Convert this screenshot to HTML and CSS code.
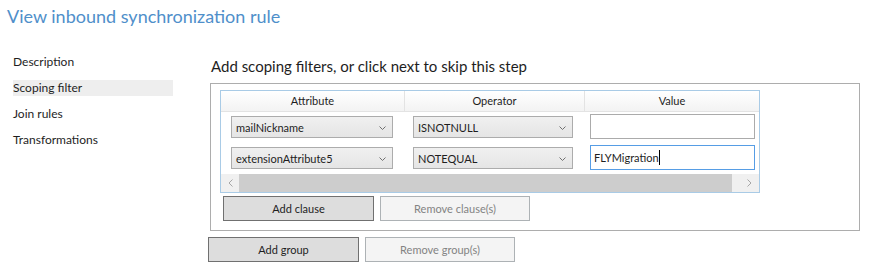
FILE: index.html
```html
<!DOCTYPE html>
<html>
<head>
<meta charset="utf-8">
<link rel="stylesheet" href="styles.css">
</head>
<body>
<div class="title">View inbound synchronization rule</div>
<div class="main">
  <nav class="nav">
    <div class="nav-item">Description</div>
    <div class="nav-item active">Scoping filter</div>
    <div class="nav-item">Join rules</div>
    <div class="nav-item">Transformations</div>
  </nav>
  <section class="content">
    <div class="heading">Add scoping filters, or click next to skip this step</div>
    <div class="group-box">
      <div class="grid">
        <div class="grid-head">
          <div class="hcell c1">Attribute</div>
          <div class="hcell c2">Operator</div>
          <div class="hcell c3">Value</div>
        </div>
        <div class="grid-row">
          <div class="cell c1"><div class="combo w1"><span>mailNickname</span><svg class="chev" width="7" height="4" viewBox="0 0 7 4"><polyline points="0.5,0.5 3.5,3.5 6.5,0.5" fill="none" stroke="#707070" stroke-width="1"/></svg></div></div>
          <div class="cell c2"><div class="combo w2"><span>ISNOTNULL</span><svg class="chev" width="7" height="4" viewBox="0 0 7 4"><polyline points="0.5,0.5 3.5,3.5 6.5,0.5" fill="none" stroke="#707070" stroke-width="1"/></svg></div></div>
          <div class="cell c3"><div class="textbox"></div></div>
        </div>
        <div class="grid-row">
          <div class="cell c1"><div class="combo w1"><span>extensionAttribute5</span><svg class="chev" width="7" height="4" viewBox="0 0 7 4"><polyline points="0.5,0.5 3.5,3.5 6.5,0.5" fill="none" stroke="#707070" stroke-width="1"/></svg></div></div>
          <div class="cell c2"><div class="combo w2"><span>NOTEQUAL</span><svg class="chev" width="7" height="4" viewBox="0 0 7 4"><polyline points="0.5,0.5 3.5,3.5 6.5,0.5" fill="none" stroke="#707070" stroke-width="1"/></svg></div></div>
          <div class="cell c3"><div class="textbox focused"><span>FLYMigration</span><span class="caret"></span></div></div>
        </div>
        <div class="hscroll">
          <div class="sb-btn left"><svg width="5" height="8" viewBox="0 0 5 8"><polyline points="4.5,0.5 1,4 4.5,7.5" fill="none" stroke="#a6a6a6" stroke-width="1"/></svg></div>
          <div class="sb-thumb"></div>
          <div class="sb-btn right"><svg width="5" height="8" viewBox="0 0 5 8"><polyline points="0.5,0.5 4,4 0.5,7.5" fill="none" stroke="#a6a6a6" stroke-width="1"/></svg></div>
        </div>
      </div>
      <div class="btn-row inner">
        <div class="btn">Add clause</div>
        <div class="btn disabled">Remove clause(s)</div>
      </div>
    </div>
    <div class="btn-row outer">
      <div class="btn">Add group</div>
      <div class="btn disabled">Remove group(s)</div>
    </div>
  </section>
</div>
</body>
</html>
```

FILE: styles.css
```css
html, body {
  margin: 0;
  padding: 0;
  background: #ffffff;
}
body {
  font-family: Lato, "Open Sans", sans-serif;
  color: #1e1e1e;
  width: 872px;
  height: 272px;
  overflow: hidden;
}
.title {
  font-size: 18px;
  line-height: 24px;
  color: #4f8fca;
  padding: 4px 0 0 7px;
  height: 26px;
}
.main {
  display: flex;
  margin-top: 24px;
}
.nav {
  margin-left: 13px;
  width: 160px;
  flex: none;
}
.nav-item {
  height: 16px;
  line-height: 16px;
  font-size: 12px;
  margin-bottom: 10px;
  white-space: nowrap;
}
.nav-item.active {
  background: #eeeeee;
}
.content {
  margin-left: 35px;
  display: flex;
  flex-direction: column;
}
.heading {
  font-size: 15px;
  line-height: 20px;
  margin: 2px 0 0 3px;
  white-space: nowrap;
}
.group-box {
  margin: 7px 0 0 2px;
  width: 650px;
  height: 148px;
  box-sizing: border-box;
  border: 1px solid #adadad;
  padding: 6px 0 0 9px;
}
.grid {
  width: 540px;
  height: 103px;
  box-sizing: border-box;
  border: 1px solid #a9cbe6;
  display: flex;
  flex-direction: column;
}
.grid-head {
  display: flex;
  height: 21px;
  box-sizing: border-box;
  border-bottom: 1px solid #e3e3e3;
  background: linear-gradient(#ffffff, #f3f3f3);
}
.hcell {
  font-size: 11px;
  line-height: 20px;
  text-align: center;
  box-sizing: border-box;
}
.c1 { width: 184px; }
.c2 { width: 180px; }
.c3 { width: 174px; }
.hcell.c1, .hcell.c2 { border-right: 1px solid #e3e3e3; }
.grid-row {
  display: flex;
  height: 31px;
  box-sizing: border-box;
  padding-top: 2px;
}
.cell { box-sizing: border-box; }
.cell.c1 { padding-left: 10px; }
.cell.c2 { padding-left: 8px; }
.cell.c3 { padding-left: 5px; }
.combo {
  margin-top: 2px;
  height: 22px;
  box-sizing: border-box;
  border: 1px solid #acacac;
  background: linear-gradient(#f0f0f0, #e5e5e5);
  display: flex;
  align-items: center;
  justify-content: space-between;
  padding: 0 6px 0 4px;
  font-size: 11px;
}
.combo.w1 { width: 162px; }
.combo.w2 { width: 160px; }
.chev { flex: none; margin-top: 1px; }
.textbox {
  width: 165px;
  height: 25px;
  box-sizing: border-box;
  border: 1px solid #ababab;
  background: #ffffff;
  display: flex;
  align-items: center;
  padding-left: 3px;
  font-size: 11px;
}
.textbox.focused { border-color: #569de5; }
.caret {
  display: inline-block;
  width: 1px;
  height: 15px;
  background: #000000;
}
.hscroll {
  margin-top: auto;
  display: flex;
  height: 18px;
  background: #f0f0f0;
}
.sb-btn {
  display: flex;
  align-items: center;
  justify-content: center;
}
.sb-btn.left { width: 18px; }
.sb-thumb {
  width: 493px;
  background: #cdcdcd;
}
.sb-btn.right { flex: 1; justify-content: flex-end; padding-right: 7px; }
.btn-row {
  display: flex;
  gap: 6px;
}
.btn-row.inner {
  margin: 3px 0 0 3px;
}
.btn-row.outer {
  margin-top: 6px;
}
.btn {
  width: 151px;
  height: 25px;
  box-sizing: border-box;
  border: 1px solid #707070;
  background: #dddddd;
  font-size: 11px;
  line-height: 23px;
  text-align: center;
}
.btn.disabled {
  width: 150px;
  border-color: #adb2b5;
  background: #f4f4f4;
  color: #838383;
}
```
